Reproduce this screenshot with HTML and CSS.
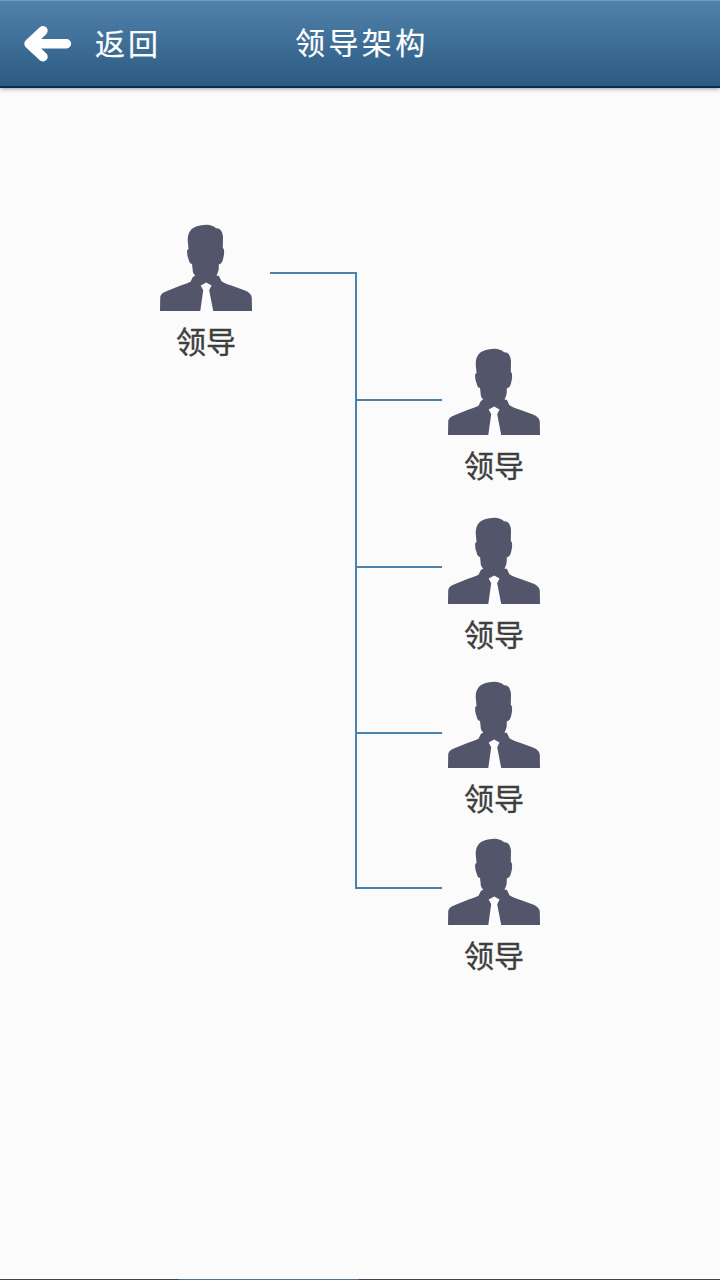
FILE: index.html
```html
<!DOCTYPE html>
<html lang="zh-CN">
<head>
<meta charset="utf-8">
<title>领导架构</title>
<link rel="stylesheet" href="styles.css">
</head>
<body>
<svg class="defs" width="0" height="0" aria-hidden="true">
  <symbol id="person" viewBox="0 0 92 87">
    <path d="M46 .7C50 .6 54 2 56 4.3C60 4 62.5 7 63 13L62.8 24C64.6 25 64.4 30 63.3 34C62.6 37.5 61.6 39.7 58.8 40.5C58.8 44 58.8 46 58 48L56.5 51.7L58.8 51.8L61.5 57.3C64 59.3 68 60.3 72 61.8L85 66.6C89 68.3 91.4 70.5 91.8 73.5L92 87H0L.2 73.5C.6 70.5 2.5 68.8 7 67L20 61.8C24 60.3 28 59.3 30.5 57.7L33 52.7L35.3 51.7C33 49.5 32.6 47.5 32.6 45L32 40C29.8 39.5 29.2 38 28.8 36L27.5 32C27 28 26.6 25.8 28.5 25L27.7 16C27.8 6 33 1.3 46 .7Z"/>
    <path class="tie" d="M46.2 58.6L51.5 61.5L49.2 66.2L53.2 87H40.3L43.2 66.2L40.7 61.5Z"/>
  </symbol>
</svg>
<div class="app">
  <header class="topbar">
    <a class="back">
      <svg class="back-arrow" width="48" height="36" viewBox="0 0 48 36"><path d="M19 4.7L5 17.7L19 30.7M6 17.7H42.5"/></svg>
      <span>返回</span>
    </a>
    <h1 class="title">领导架构</h1>
  </header>
  <main class="chart">
    <svg class="links" width="172" height="618" viewBox="0 0 172 618"><path d="M0 1H86V616H172M86 128H172M86 295H172M86 461H172"/></svg>
    <div class="node root"><svg class="avatar"><use href="#person"/></svg><span>领导</span></div>
    <div class="node child first"><svg class="avatar"><use href="#person"/></svg><span>领导</span></div>
    <div class="node child second"><svg class="avatar"><use href="#person"/></svg><span>领导</span></div>
    <div class="node child third"><svg class="avatar"><use href="#person"/></svg><span>领导</span></div>
    <div class="node child fourth"><svg class="avatar"><use href="#person"/></svg><span>领导</span></div>
  </main>
  <footer class="bottom-edge"><i></i><i class="active"></i><i></i></footer>
</div>
</body>
</html>
```
FILE: styles.css
```css
* { box-sizing: border-box; }
body {
  margin: 0;
  background: #fbfbfb;
  font-family: "Noto Sans CJK SC", sans-serif;
}
.defs { position: absolute; }
.app {
  display: flex;
  flex-direction: column;
  width: 720px;
  height: 1280px;
  overflow: hidden;
}
.topbar {
  display: grid;
  grid-template-columns: 295px 1fr;
  height: 88px;
  flex: none;
  border-top: 1px solid #759bb9;
  border-bottom: 2px solid #052d56;
  background: linear-gradient(#5182ab, #2b5a82);
  box-shadow: 0 1px 4px rgba(0, 0, 0, .38);
  color: #fff;
  -webkit-text-stroke: .2px currentColor;
}
.back {
  display: flex;
  align-items: center;
  gap: 23px;
  padding: 1px 0 0 24px;
  font-size: 30px;
  line-height: 44px;
  letter-spacing: 3px;
}
.back span { margin-top: -4px; }
.back-arrow {
  fill: none;
  stroke: #fff;
  stroke-width: 9.4;
  stroke-linecap: round;
  stroke-linejoin: round;
}
.title {
  margin: 0;
  padding-top: 18px;
  font-size: 30px;
  font-weight: 400;
  line-height: 44px;
  letter-spacing: 3.4px;
}
.chart {
  position: relative;
  flex: 1;
}
.links {
  position: absolute;
  left: 270px;
  top: 184px;
  fill: none;
  stroke: #4c82a9;
  stroke-width: 2;
}
.node {
  position: absolute;
  display: flex;
  flex-direction: column;
  align-items: center;
  width: 92px;
  color: #3e3e3e;
  font-size: 30px;
  line-height: 44px;
  -webkit-text-stroke: .4px currentColor;
}
.node span { margin-top: 7px; }
.avatar {
  width: 92px;
  height: 87px;
  fill: #53566a;
}
.tie { fill: #fdfcff; }
.root { left: 160px; top: 136px; }
.child { left: 448px; }
.first { top: 260px; }
.second { top: 429px; }
.third { top: 593px; }
.fourth { top: 750px; }
.bottom-edge {
  display: grid;
  grid-template-columns: 179px 180px 1fr;
  height: 1px;
}
.bottom-edge i { background: #464347; }
.bottom-edge .active { background: #4b7398; }
```
